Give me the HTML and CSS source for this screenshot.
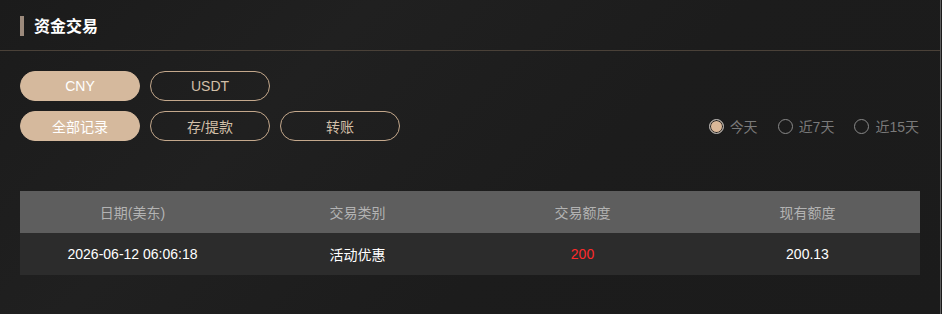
FILE: index.html
```html
<!DOCTYPE html>
<html lang="zh">
<head>
<meta charset="utf-8">
<link rel="stylesheet" href="styles.css">
</head>
<body>
<div class="panel">
  <div class="title-bar">
    <span class="title-mark"></span>
    <h1 class="title">资金交易</h1>
  </div>
  <div class="content">
    <div class="btn-row">
      <button class="pill active">CNY</button>
      <button class="pill">USDT</button>
    </div>
    <div class="btn-row filter-row">
      <div class="btn-group">
        <button class="pill active">全部记录</button>
        <button class="pill">存/提款</button>
        <button class="pill">转账</button>
      </div>
      <div class="radios">
        <label class="radio checked"><span class="dot"></span>今天</label>
        <label class="radio"><span class="dot"></span>近7天</label>
        <label class="radio"><span class="dot"></span>近15天</label>
      </div>
    </div>
    <table class="records">
      <thead>
        <tr><th>日期(美东)</th><th>交易类别</th><th>交易额度</th><th>现有额度</th></tr>
      </thead>
      <tbody>
        <tr><td>2026-06-12 06:06:18</td><td>活动优惠</td><td class="neg">200</td><td>200.13</td></tr>
      </tbody>
    </table>
  </div>
</div>
</body>
</html>
```

FILE: styles.css
```css
html, body {
  margin: 0;
  padding: 0;
  background: #1c1c1c;
}
body {
  font-family: "Liberation Sans", "Noto Sans CJK SC", Arial, sans-serif;
  font-size: 14px;
  color: #fff;
  width: 942px;
  height: 314px;
  overflow: hidden;
}
.panel {
  width: 940px;
  height: 314px;
  border-right: 1px solid #5e5e5e;
  background: linear-gradient(135deg, #1b1b1b 0%, #202020 30%, #1c1c1c 60%, #1b1b1b 100%);
}
.title-bar {
  height: 51px;
  box-sizing: border-box;
  border-bottom: 1px solid #4a4138;
  display: flex;
  align-items: center;
  padding-left: 20px;
}
.title-mark {
  width: 4px;
  height: 20px;
  background: #9c8a7c;
  margin-right: 10px;
  margin-top: 1px;
}
.title {
  margin: 0;
  font-size: 16px;
  font-weight: bold;
  color: #fff;
}
.content {
  padding: 20px 20px 0 20px;
}
.btn-row {
  display: flex;
  gap: 10px;
  margin-bottom: 10px;
}
.filter-row {
  justify-content: space-between;
  align-items: center;
  margin-bottom: 50px;
}
.btn-group {
  display: flex;
  gap: 10px;
}
.pill {
  width: 120px;
  height: 30px;
  border-radius: 15px;
  border: 1px solid #c4a88c;
  background: transparent;
  color: #d2bfa8;
  font-family: "Liberation Sans", "Noto Sans CJK SC", Arial, sans-serif;
  font-size: 14px;
  padding: 0;
  cursor: pointer;
}
.pill.active {
  background: #d5b99d;
  border-color: #d5b99d;
  color: #fff;
}
.radios {
  display: flex;
  gap: 20px;
  margin-right: 1px;
}
.radio {
  display: flex;
  align-items: center;
  color: #7a7a7a;
  font-size: 14px;
}
.dot {
  width: 15px;
  height: 15px;
  border: 1px solid #8a8a8a;
  border-radius: 50%;
  margin-right: 6px;
  box-sizing: border-box;
}
.radio.checked .dot {
  border: 1px solid #b0b0b0;
  background: #dbb898;
  box-shadow: inset 0 0 0 1px #1c1c1c;
}
.records {
  width: 900px;
  border-collapse: collapse;
  table-layout: fixed;
}
.records th {
  height: 42px;
  background: #5e5e5e;
  color: #b3b3b3;
  font-weight: normal;
  font-size: 14px;
  padding: 0;
}
.records td {
  height: 42px;
  background: #2c2c2c;
  color: #fff;
  text-align: center;
  padding: 0;
}
.records td.neg {
  color: #ff2a2a;
}
```
